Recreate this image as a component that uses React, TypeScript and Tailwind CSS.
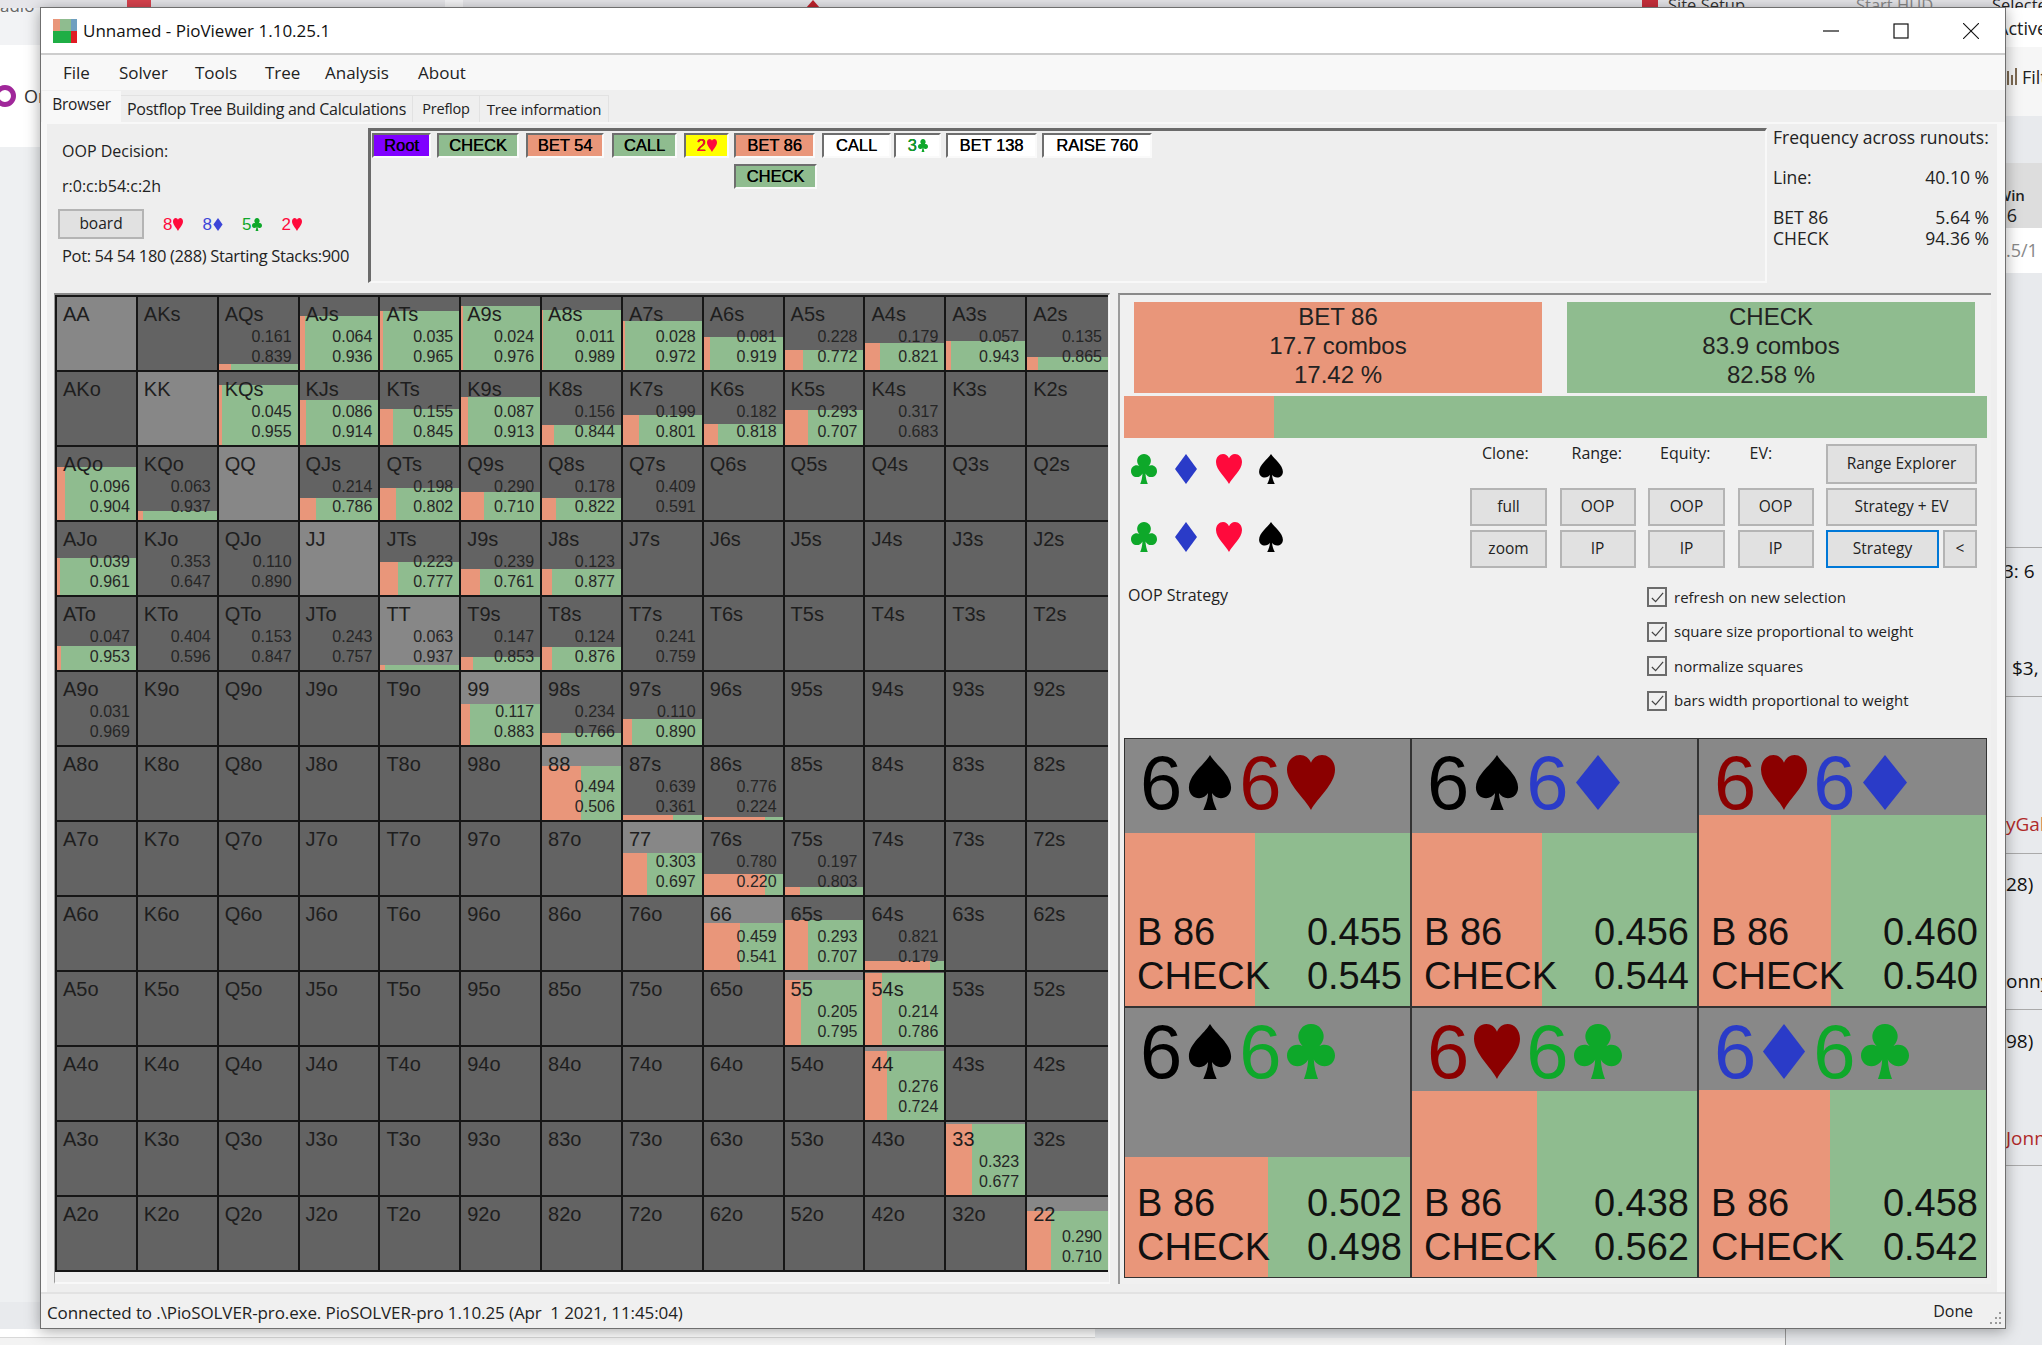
import { ReactNode } from "react";

const PINK = "#e9967a";
const GREEN = "#8fbc8f";

const RANKS = ["A", "K", "Q", "J", "T", "9", "8", "7", "6", "5", "4", "3", "2"];

// label: [bet, check, bar height in px]
const CELLS: Record<string, [string, string, number]> = {
  AQs: ["0.161", "0.839", 6],
  AJs: ["0.064", "0.936", 54],
  ATs: ["0.035", "0.965", 59],
  A9s: ["0.024", "0.976", 64],
  A8s: ["0.011", "0.989", 60],
  A7s: ["0.028", "0.972", 49],
  A6s: ["0.081", "0.919", 33],
  A5s: ["0.228", "0.772", 20],
  A4s: ["0.179", "0.821", 27],
  A3s: ["0.057", "0.943", 29],
  A2s: ["0.135", "0.865", 13],
  KQs: ["0.045", "0.955", 60],
  KJs: ["0.086", "0.914", 45],
  KTs: ["0.155", "0.845", 36],
  K9s: ["0.087", "0.913", 48],
  K8s: ["0.156", "0.844", 20],
  K7s: ["0.199", "0.801", 30],
  K6s: ["0.182", "0.818", 21],
  K5s: ["0.293", "0.707", 35],
  K4s: ["0.317", "0.683", 0],
  AQo: ["0.096", "0.904", 53],
  KQo: ["0.063", "0.937", 9],
  QJs: ["0.214", "0.786", 22],
  QTs: ["0.198", "0.802", 32],
  Q9s: ["0.290", "0.710", 28],
  Q8s: ["0.178", "0.822", 22],
  Q7s: ["0.409", "0.591", 0],
  AJo: ["0.039", "0.961", 37],
  KJo: ["0.353", "0.647", 0],
  QJo: ["0.110", "0.890", 0],
  JTs: ["0.223", "0.777", 33],
  J9s: ["0.239", "0.761", 26],
  J8s: ["0.123", "0.877", 26],
  ATo: ["0.047", "0.953", 24],
  KTo: ["0.404", "0.596", 0],
  QTo: ["0.153", "0.847", 0],
  JTo: ["0.243", "0.757", 0],
  TT: ["0.063", "0.937", 5],
  T9s: ["0.147", "0.853", 13],
  T8s: ["0.124", "0.876", 23],
  T7s: ["0.241", "0.759", 0],
  A9o: ["0.031", "0.969", 0],
  "99": ["0.117", "0.883", 41],
  "98s": ["0.234", "0.766", 12],
  "97s": ["0.110", "0.890", 26],
  "88": ["0.494", "0.506", 54],
  "87s": ["0.639", "0.361", 5],
  "86s": ["0.776", "0.224", 3],
  "77": ["0.303", "0.697", 42],
  "76s": ["0.780", "0.220", 21],
  "75s": ["0.197", "0.803", 8],
  "66": ["0.459", "0.541", 47],
  "65s": ["0.293", "0.707", 50],
  "64s": ["0.821", "0.179", 9],
  "55": ["0.205", "0.795", 65],
  "54s": ["0.214", "0.786", 72],
  "44": ["0.276", "0.724", 69],
  "33": ["0.323", "0.677", 71],
  "22": ["0.290", "0.710", 59],
};

type SuitName = "s" | "h" | "d" | "c";

function Suit({ suit, color, className }: { suit: SuitName; color: string; className: string }) {
  return (
    <svg viewBox="0 0 24 28" className={className} fill={color} preserveAspectRatio="none">
      {suit === "s" && (
        <path d="M12 0C9 5 1 10 1 16.5 1 20 3.6 22 6.3 22c2 0 3.7-1 4.7-2.6C10.8 22.500 10 25 8.500 28h7C14 25 13.200 22.500 13 19.400 14 21 15.700 22 17.700 22 20.400 22 23 20 23 16.500 23 10 15 5 12 0Z" />
      )}
      {suit === "h" && (
        <path d="M12 28C9 22 0 15 0 7.500 0 3 3 0 6.500 0 9 0 11 1.500 12 4 13 1.500 15 0 17.500 0 21 0 24 3 24 7.500 24 15 15 22 12 28Z" />
      )}
      {suit === "d" && <path d="M12 0 23 14 12 28 1 14Z" />}
      {suit === "c" && (
        <path d="M12 0a6.300 6.300 0 0 1 6 8.300c-.5 1.300-1 2-1.800 2.900 .9-.5 1.700-.7 2.500-.7 3 0 5.300 2.400 5.300 5.500S21.700 21.500 18.700 21.500c-2.300 0-4.300-1.400-5.300-3.400.2 3.900 1 7 2.100 9.900h-7c1.100-2.900 1.900-6 2.100-9.900-1 2-3 3.400-5.300 3.400C2.300 21.500 0 19.100 0 16S2.300 10.500 5.300 10.500c.8 0 1.600.2 2.500.7-.8-.9-1.300-1.600-1.800-2.900A6.300 6.300 0 0 1 12 0Z" />
      )}
    </svg>
  );
}

function RangeCell({ row, col }: { row: number; col: number }) {
  const label =
    row === col
      ? RANKS[row] + RANKS[col]
      : row < col
        ? RANKS[row] + RANKS[col] + "s"
        : RANKS[col] + RANKS[row] + "o";
  const data = CELLS[label];
  const pair = row === col;
  const bet = data ? parseFloat(data[0]) : 0;

  return (
    <div
      className={`relative h-[75px] overflow-hidden border-b-2 border-[#161616] font-['Liberation_Sans',sans-serif] text-[#1e1e1e] ${
        col === 12 ? "" : "border-r-2"
      } ${pair ? "bg-[#878787]" : "bg-[#636363]"}`}
    >
      {data && data[2] > 0 && (
        <div className="absolute right-0 bottom-0 left-0 flex" style={{ height: data[2] }}>
          <div className="h-full" style={{ width: `${bet * 100}%`, background: PINK }} />
          <div className="h-full flex-1" style={{ background: GREEN }} />
        </div>
      )}
      <div className="relative pt-[6px] pl-[6px] text-[20px] leading-[23px]">{label}</div>
      {data && (
        <div className="relative pt-[1px] pr-[6px] text-right text-[16px] leading-[20px] text-[#262626]">
          <div>{data[0]}</div>
          <div>{data[1]}</div>
        </div>
      )}
    </div>
  );
}

function TreeButton({ w, bg, children }: { w: number; bg: string; children: ReactNode }) {
  return (
    <div
      className="flex h-[25px] items-center justify-center border-2 border-t-[#6e6e6e] border-r-[#fafafa] border-b-[#fafafa] border-l-[#6e6e6e] font-['Liberation_Sans',sans-serif] text-[16.5px] text-black [text-shadow:0.3px_0_0_#000]"
      style={{ width: w, background: bg }}
    >
      {children}
    </div>
  );
}

function SmallCard({ rank, suit, color }: { rank: string; suit: SuitName; color: string }) {
  return (
    <span className="inline-flex items-center font-['Liberation_Sans',sans-serif] text-[17px] leading-none" style={{ color }}>
      {rank}
      <Suit suit={suit} color={color} className="ml-px h-[13px] w-[10px]" />
    </span>
  );
}

function WinButton({ className, children }: { className?: string; children: ReactNode }) {
  return (
    <div className={`flex items-center justify-center border-2 border-[#b4b4b4] bg-[#e1e1e1] text-[15.5px] text-[#222] ${className ?? ""}`}>
      {children}
    </div>
  );
}

function Check({ label }: { label: string }) {
  return (
    <div className="flex h-[20px] items-center">
      <div className="flex h-[20px] w-[20px] items-center justify-center border-2 border-[#6b6b6b]">
        <svg viewBox="0 0 16 16" className="h-[15px] w-[15px]" fill="none" stroke="#444" strokeWidth="1.300">
          <path d="M2 8.500 6 12.500 14 3" />
        </svg>
      </div>
      <span className="ml-[7px] text-[15px] text-[#222]">{label}</span>
    </div>
  );
}

function HandCell({
  a,
  b,
  bet,
  check,
  bar,
  w,
}: {
  a: SuitName;
  b: SuitName;
  bet: string;
  check: string;
  bar: number;
  w: string;
}) {
  const colors: Record<SuitName, string> = { s: "#000000", h: "#8b0000", d: "#2a3bc8", c: "#0ea82a" };
  const pinkWidth = parseFloat(bet) * 100;
  return (
    <div className={`relative flex h-[269px] flex-col overflow-hidden bg-[#888888] font-['Liberation_Sans',sans-serif] ${w}`}>
      <div className="absolute right-0 bottom-0 left-0 flex" style={{ height: bar }}>
        <div className="h-full" style={{ width: `${pinkWidth}%`, background: PINK }} />
        <div className="h-full flex-1" style={{ background: GREEN }} />
      </div>
      <div className="relative flex h-[87px] items-center pl-[15px] text-[76px] leading-none">
        <span style={{ color: colors[a] }}>6</span>
        <Suit suit={a} color={colors[a]} className="mr-[6px] ml-[5px] h-[55px] w-[46px]" />
        <span style={{ color: colors[b] }}>6</span>
        <Suit suit={b} color={colors[b]} className="ml-[5px] h-[55px] w-[48px]" />
      </div>
      <div className="relative mt-auto pr-[8px] pb-[8px] pl-[12px] text-[38px] leading-[44px] text-[#111]">
        <div className="flex justify-between">
          <span>B 86</span>
          <span>{bet}</span>
        </div>
        <div className="flex justify-between">
          <span>CHECK</span>
          <span>{check}</span>
        </div>
      </div>
    </div>
  );
}

function Backdrop() {
  return (
    <div className="absolute inset-0 bg-[#e8eaed] font-['Open_Sans',sans-serif]">
      <div className="absolute top-0 left-0 h-[45px] w-[40px] overflow-hidden bg-[#f2f3f5] text-[17px] leading-[12px] text-[#666]">adio</div>
      <div className="absolute top-[45px] left-0 flex h-[102px] w-[40px] items-center gap-[8px] overflow-hidden bg-white">
        <div className="-ml-[6px] h-[22px] w-[22px] shrink-0 rounded-full border-[5px] border-[#a0279a]" />
        <span className="text-[18px] text-[#333]">Or</span>
      </div>
      <div className="absolute top-[147px] left-0 h-[1155px] w-[40px] bg-[#eef0f2]" />
      <div className="absolute top-[1329px] left-0 h-[9px] w-[1095px] border-b border-[#d8d8d8] bg-white" />
      <div className="absolute top-[1338px] left-0 h-[7px] w-[1785px] bg-[#f3f3f3]" />
      <div className="absolute top-[1329px] left-[1785px] h-[16px] w-px bg-[#9a9a9a]" />
      <div className="absolute top-0 left-0 h-[8px] w-[2042px] overflow-hidden bg-[#e6e6ea]">
        <div className="absolute top-0 left-[127px] h-[8px] w-[24px] bg-[#d9434f]" />
        <div className="absolute top-0 left-[445px] h-[8px] w-[18px] bg-[#f5f5f7]" />
        <div className="absolute top-0 left-[806px] h-[8px] w-[14px] bg-[#c0222c] [clip-path:polygon(50%_0,100%_100%,0_100%)]" />
        <div className="absolute top-0 left-[1642px] h-[8px] w-[16px] bg-[#c9303c]" />
        <div className="absolute top-0 left-[1668px] text-[16.5px] leading-[10px] text-[#333]">Site Setup</div>
        <div className="absolute top-0 left-[1856px] text-[16.5px] leading-[10px] text-[#888]">Start HUD</div>
        <div className="absolute top-0 left-[1992px] text-[16.5px] leading-[10px] text-[#222]">Selecte</div>
      </div>
      <div className="absolute top-[8px] left-[2006px] h-[39px] w-[36px] overflow-hidden bg-white pt-[8px] text-[18px] leading-[24px] whitespace-nowrap text-[#222]">
        <div className="-ml-[9px]">Active</div>
      </div>
      <div className="absolute top-[47px] left-[2006px] flex h-[69px] w-[36px] gap-[4px] overflow-hidden bg-[#f6f6f6] pt-[18px] text-[18px] leading-[24px] text-[#222]">
        <svg viewBox="0 0 12 20" className="h-[20px] w-[12px] shrink-0">
          <path d="M1 6h2v14H1ZM5 10h2v10H5ZM9 3h2v17H9Z" fill="#7d6a52" />
        </svg>
        <span>Filt</span>
      </div>
      <div className="absolute top-[163px] left-[2006px] h-[65px] w-[36px] overflow-hidden bg-[#dddddd] pt-[22px] text-[15px] leading-[20px] font-semibold whitespace-nowrap text-[#222]">
        <div className="-ml-[9px]">Win</div>
        <div className="-ml-[4px] text-[18px] font-normal">:6</div>
      </div>
      <div className="absolute top-[228px] left-[2006px] h-[45px] w-[36px] overflow-hidden bg-white pt-[10px] text-[18px] leading-[24px] whitespace-nowrap text-[#888]">.5/1</div>
      <div className="absolute top-[547px] left-[2006px] h-px w-[36px] bg-[#aaa]" />
      <div className="absolute top-[696px] left-[2006px] h-px w-[36px] bg-[#aaa]" />
      <div className="absolute top-[853px] left-[2006px] h-px w-[36px] bg-[#aaa]" />
      <div className="absolute top-[1009px] left-[2006px] h-px w-[36px] bg-[#aaa]" />
      <div className="absolute top-[1165px] left-[2006px] h-px w-[36px] bg-[#aaa]" />
      <div className="absolute top-[558px] left-[2006px] w-[36px] overflow-hidden text-[19px] leading-[26px] whitespace-nowrap text-[#111]">
        <div className="-ml-[3px]">3: 6</div>
      </div>
      <div className="absolute top-[655px] left-[2012px] w-[30px] overflow-hidden text-[19px] leading-[26px] whitespace-nowrap text-[#111]">$3,</div>
      <div className="absolute top-[811px] left-[2006px] w-[36px] overflow-hidden text-[19px] leading-[26px] whitespace-nowrap text-[#b02a2a]">yGab</div>
      <div className="absolute top-[871px] left-[2006px] w-[36px] overflow-hidden text-[19px] leading-[26px] whitespace-nowrap text-[#111]">28)</div>
      <div className="absolute top-[968px] left-[2006px] w-[36px] overflow-hidden text-[19px] leading-[26px] whitespace-nowrap text-[#111]">onny</div>
      <div className="absolute top-[1028px] left-[2006px] w-[36px] overflow-hidden text-[19px] leading-[26px] whitespace-nowrap text-[#111]">98)</div>
      <div className="absolute top-[1125px] left-[2006px] w-[36px] overflow-hidden text-[19px] leading-[26px] whitespace-nowrap text-[#b02a2a]">Jonn</div>
    </div>
  );
}

export default function App() {
  const uiFont = "font-['Open_Sans',sans-serif]";
  return (
    <div className={`relative h-[1345px] w-[2042px] overflow-hidden ${uiFont}`}>
      <Backdrop />

      {/* WINDOW */}
      <div className="absolute top-[7px] left-[40px] flex h-[1322px] w-[1966px] flex-col border border-[#6f6f6f] bg-[#f8f8f8] shadow-[0_2px_14px_rgba(0,0,0,0.35)]">
        {/* TITLE BAR */}
        <div className="flex h-[47px] shrink-0 items-center border-b-2 border-[#cdcdcd] bg-white">
          <svg viewBox="0 0 24 24" className="ml-[12px] h-[24px] w-[24px]" preserveAspectRatio="none">
            <rect x="0" y="0" width="7" height="12" fill="#e9967a" />
            <rect x="7" y="0" width="11" height="12" fill="#8fbc8f" />
            <rect x="18" y="0" width="6" height="12" fill="#6f9fc0" />
            <rect x="0" y="12" width="18" height="12" fill="#1fae45" />
            <rect x="18" y="12" width="6" height="12" fill="#e01b24" />
          </svg>
          <span className="ml-[6px] text-[17px] text-[#111]">Unnamed - PioViewer 1.10.25.1</span>
          <div className="ml-auto flex h-full">
            <div className="flex w-[70px] items-center justify-center">
              <svg viewBox="0 0 16 16" className="h-[16px] w-[16px]" stroke="#111" strokeWidth="1.200">
                <path d="M0 8h16" />
              </svg>
            </div>
            <div className="flex w-[70px] items-center justify-center">
              <svg viewBox="0 0 16 16" className="h-[16px] w-[16px]" fill="none" stroke="#111" strokeWidth="1.200">
                <rect x="1" y="1" width="14" height="14" />
              </svg>
            </div>
            <div className="flex w-[69px] items-center justify-center">
              <svg viewBox="0 0 16 16" className="h-[16px] w-[16px]" stroke="#111" strokeWidth="1.100">
                <path d="M0 0 16 16M16 0 0 16" />
              </svg>
            </div>
          </div>
        </div>

        {/* MENU */}
        <div className="flex h-[35px] shrink-0 items-center bg-[#f8f8f8] text-[17px] text-[#222]">
          <span className="ml-[22px] w-[56px]">File</span>
          <span className="w-[76px]">Solver</span>
          <span className="w-[70px]">Tools</span>
          <span className="w-[60px]">Tree</span>
          <span className="w-[93px]">Analysis</span>
          <span>About</span>
        </div>

        {/* TABS */}
        <div className="flex h-[32px] shrink-0 items-end bg-[#efefef] pl-[1px] text-[#222]">
          <div className="flex h-[31px] w-[79px] items-center justify-center bg-[#f8f8f8] pb-[3px] text-[15.5px] tracking-[-0.2px]">Browser</div>
          <div className="flex h-[27px] w-[292px] items-center justify-center border-t border-r border-[#e2e2e2] text-[16px] tracking-[-0.3px] whitespace-nowrap">Postflop Tree Building and Calculations</div>
          <div className="flex h-[27px] w-[67px] items-center justify-center border-t border-r border-[#e2e2e2] text-[14.5px] tracking-[-0.2px]">Preflop</div>
          <div className="flex h-[27px] w-[129px] items-center justify-center border-t border-r border-[#e2e2e2] text-[15px] tracking-[-0.2px]">Tree information</div>
        </div>

        {/* PAGE */}
        <div className="mx-[6px] flex min-h-0 flex-1 flex-col border-t-2 border-r-2 border-[#f8f8f8] bg-[#eeeeee] text-[16px] text-[#222]">
          <div className="flex h-[169px] shrink-0">
            {/* DECISION INFO */}
            <div className="w-[321px] shrink-0 pl-[11px]">
              <div className="mt-[17px] pl-[4px] leading-[20px]">OOP Decision:</div>
              <div className="mt-[15px] pl-[4px] leading-[20px]">r:0:c:b54:c:2h</div>
              <div className="mt-[13px] flex items-center">
                <WinButton className="h-[30px] w-[86px]">board</WinButton>
                <div className="ml-[19px] flex gap-[19px]">
                  <SmallCard rank="8" suit="h" color="#ff0a3c" />
                  <SmallCard rank="8" suit="d" color="#3b45d8" />
                  <SmallCard rank="5" suit="c" color="#0ea82a" />
                  <SmallCard rank="2" suit="h" color="#ff0a3c" />
                </div>
              </div>
              <div className="mt-[7px] pl-[4px] text-[16.5px] leading-[20px] tracking-[-0.35px] whitespace-nowrap">Pot: 54 54 180 (288) Starting Stacks:900</div>
            </div>

            {/* TREE */}
            <div className="mt-[4px] h-[155px] w-[1399px] shrink-0 border-t-[3px] border-r-2 border-b-2 border-l-[3px] border-t-[#6a6a6a] border-r-[#f8f8f8] border-b-[#f8f8f8] border-l-[#6a6a6a] pt-[2px] pl-[1px]">
              <div className="flex">
                <TreeButton w={59} bg="#7f00ff">Root</TreeButton>
                <div className="w-[6px]" />
                <TreeButton w={82} bg={GREEN}>CHECK</TreeButton>
                <div className="w-[7px]" />
                <TreeButton w={78} bg={PINK}>BET 54</TreeButton>
                <div className="w-[8px]" />
                <TreeButton w={65} bg={GREEN}>CALL</TreeButton>
                <div className="w-[7px]" />
                <TreeButton w={45} bg="#ffff00">
                  <span className="flex items-center text-[#ff0a3c]">
                    2<Suit suit="h" color="#ff0a3c" className="ml-px h-[13px] w-[10px]" />
                  </span>
                </TreeButton>
                <div className="w-[5px]" />
                <TreeButton w={81} bg={PINK}>BET 86</TreeButton>
                <div className="w-[7px]" />
                <TreeButton w={69} bg="#ffffff">CALL</TreeButton>
                <div className="w-[3px]" />
                <TreeButton w={47} bg="#ffffff">
                  <span className="flex items-center text-[#0ea82a]">
                    3<Suit suit="c" color="#0ea82a" className="ml-px h-[13px] w-[10px]" />
                  </span>
                </TreeButton>
                <div className="w-[5px]" />
                <TreeButton w={91} bg="#ffffff">BET 138</TreeButton>
                <div className="w-[5px]" />
                <TreeButton w={110} bg="#ffffff">RAISE 760</TreeButton>
              </div>
              <div className="mt-[6px] ml-[362px] flex">
                <TreeButton w={83} bg={GREEN}>CHECK</TreeButton>
              </div>
            </div>

            {/* FREQUENCY */}
            <div className="w-[222px] shrink-0 pt-[3px] pl-[6px] text-[17.5px] whitespace-nowrap">
              <div className="leading-[20px]">Frequency across runouts:</div>
              <div className="mt-[20px] flex justify-between leading-[20px]">
                <span>Line:</span>
                <span>40.10 %</span>
              </div>
              <div className="mt-[20px] flex justify-between leading-[21px]">
                <span>BET 86</span>
                <span>5.64 %</span>
              </div>
              <div className="flex justify-between leading-[21px]">
                <span>CHECK</span>
                <span>94.36 %</span>
              </div>
            </div>
          </div>

          <div className="flex">
            {/* RANGE GRID */}
            <div className="ml-[7px] h-[991px] w-[1056px] shrink-0 border-t-2 border-r border-b-2 border-l border-t-[#8a8a8a] border-r-[#f8f8f8] border-b-[#f8f8f8] border-l-[#9a9a9a]">
              <div className="grid w-fit grid-cols-[repeat(13,80.85px)] border-t-2 border-l-2 border-[#161616]">
                {RANKS.map((_, row) => RANKS.map((_, col) => <RangeCell key={`${row}-${col}`} row={row} col={col} />))}
              </div>
            </div>

            {/* RIGHT PANEL */}
            <div className="ml-[8px] h-[991px] w-[873px] shrink-0 border-t-2 border-l-2 border-t-[#8a8a8a] border-l-[#9a9a9a] bg-[#f0f0f0]">
              <div className="mt-[7px] ml-[14px] flex gap-[25px] font-['Liberation_Sans',sans-serif] text-[24px] leading-[29px] text-[#222]">
                <div className="h-[91px] w-[408px] text-center" style={{ background: PINK }}>
                  <div>BET 86</div>
                  <div>17.7 combos</div>
                  <div>17.42 %</div>
                </div>
                <div className="h-[91px] w-[408px] text-center" style={{ background: GREEN }}>
                  <div>CHECK</div>
                  <div>83.9 combos</div>
                  <div>82.58 %</div>
                </div>
              </div>

              <div className="mt-[3px] ml-[4px] flex h-[42px] w-[863px]">
                <div className="h-full w-[150px]" style={{ background: PINK }} />
                <div className="h-full flex-1" style={{ background: GREEN }} />
              </div>

              <div className="ml-[4px] flex h-[300px]">
                <div className="w-[346px] shrink-0">
                  <div className="mt-[16px] flex pl-[7px]">
                    <Suit suit="c" color="#0ea82a" className="h-[30px] w-[26px]" />
                    <Suit suit="d" color="#2a3bc8" className="ml-[17px] h-[30px] w-[24px]" />
                    <Suit suit="h" color="#ff0a3c" className="ml-[18px] h-[30px] w-[26px]" />
                    <Suit suit="s" color="#000000" className="ml-[16px] h-[30px] w-[26px]" />
                  </div>
                  <div className="mt-[38px] flex pl-[7px]">
                    <Suit suit="c" color="#0ea82a" className="h-[30px] w-[26px]" />
                    <Suit suit="d" color="#2a3bc8" className="ml-[17px] h-[30px] w-[24px]" />
                    <Suit suit="h" color="#ff0a3c" className="ml-[18px] h-[30px] w-[26px]" />
                    <Suit suit="s" color="#000000" className="ml-[16px] h-[30px] w-[26px]" />
                  </div>
                  <div className="mt-[33px] pl-[4px] text-[16px] leading-[20px]">OOP Strategy</div>
                </div>

                <div className="w-[507px] shrink-0">
                  <div className="mt-[5px] grid grid-cols-[77px_76px_77px_76px_151px] grid-rows-[41px_38px_38px] gap-x-[12.5px] gap-y-[4px] text-[16px]">
                    <div className="pl-3 leading-[20px]">Clone:</div>
                    <div className="pl-3 leading-[20px]">Range:</div>
                    <div className="pl-3 leading-[20px]">Equity:</div>
                    <div className="pl-3 leading-[20px]">EV:</div>
                    <WinButton className="mt-[1px]">Range Explorer</WinButton>
                    <WinButton>full</WinButton>
                    <WinButton>OOP</WinButton>
                    <WinButton>OOP</WinButton>
                    <WinButton>OOP</WinButton>
                    <WinButton>Strategy + EV</WinButton>
                    <WinButton>zoom</WinButton>
                    <WinButton>IP</WinButton>
                    <WinButton>IP</WinButton>
                    <WinButton>IP</WinButton>
                    <div className="flex gap-[4px]">
                      <WinButton className="w-[113px] !border-[#0078d7]">Strategy</WinButton>
                      <WinButton className="flex-1">&lt;</WinButton>
                    </div>
                  </div>
                  <div className="mt-[19px] ml-[177px] flex flex-col gap-[14.5px]">
                    <Check label="refresh on new selection" />
                    <Check label="square size proportional to weight" />
                    <Check label="normalize squares" />
                    <Check label="bars width proportional to weight" />
                  </div>
                </div>
              </div>

              {/* HAND GRID */}
              <div className="ml-[4px] grid w-[863px] grid-cols-[287px_287px_1fr] border border-[#333]">
                <HandCell a="s" b="h" bet="0.455" check="0.545" bar={173} w="border-r-2 border-b-2 border-[#333]" />
                <HandCell a="s" b="d" bet="0.456" check="0.544" bar={173} w="border-r-2 border-b-2 border-[#333]" />
                <HandCell a="h" b="d" bet="0.460" check="0.540" bar={191} w="border-b-2 border-[#333]" />
                <HandCell a="s" b="c" bet="0.502" check="0.498" bar={120} w="border-r-2 border-[#333]" />
                <HandCell a="h" b="c" bet="0.438" check="0.562" bar={186} w="border-r-2 border-[#333]" />
                <HandCell a="d" b="c" bet="0.458" check="0.542" bar={187} w="" />
              </div>
            </div>
          </div>
        </div>

        {/* STATUS BAR */}
        <div className="relative flex h-[36px] shrink-0 items-center border-t-2 border-[#e2e2e2] bg-[#f0f0f0] pt-[3px] pr-[32px] pl-[6px] text-[17px] tracking-[-0.1px] text-[#222]">
          <span className="whitespace-pre">Connected to .\PioSOLVER-pro.exe. PioSOLVER-pro 1.10.25 (Apr  1 2021, 11:45:04)</span>
          <span className="mb-[4px] ml-auto text-[16px]">Done</span>
          <svg viewBox="0 0 16 16" className="absolute right-[2px] bottom-[2px] h-[16px] w-[16px]" fill="#9a9a9a">
            <rect x="12" y="2" width="2" height="2" />
            <rect x="8" y="7" width="2" height="2" />
            <rect x="12" y="7" width="2" height="2" />
            <rect x="3" y="12" width="2" height="2" />
            <rect x="8" y="12" width="2" height="2" />
            <rect x="12" y="12" width="2" height="2" />
          </svg>
        </div>
      </div>
    </div>
  );
}
